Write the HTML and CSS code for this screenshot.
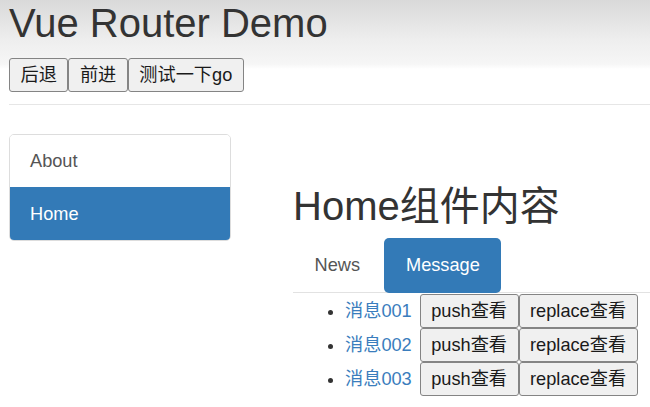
FILE: index.html
```html
<!DOCTYPE html>
<html lang="zh-CN">
<head>
<meta charset="utf-8">
<title>Vue Router Demo</title>
<link rel="stylesheet" href="styles.css">
</head>
<body>
<div class="page">
  <header class="page-header">
    <h2 class="title">Vue Router Demo</h2>
    <div class="btn-row">
      <button class="btn">后退</button><button class="btn">前进</button><button class="btn">测试一下go</button>
    </div>
  </header>
  <div class="main">
    <aside class="side">
      <div class="list-group">
        <a class="list-item" href="#">About</a>
        <a class="list-item active" href="#">Home</a>
      </div>
    </aside>
    <section class="content">
      <h2 class="sub-title">Home组件内容</h2>
      <nav class="tabs">
        <a class="tab" href="#">News</a>
        <a class="tab active" href="#">Message</a>
      </nav>
      <ul class="msg-list">
        <li class="msg"><a class="msg-link" href="#">消息001</a><span class="btn-row inline"><button class="btn">push查看</button><button class="btn">replace查看</button></span></li>
        <li class="msg"><a class="msg-link" href="#">消息002</a><span class="btn-row inline"><button class="btn">push查看</button><button class="btn">replace查看</button></span></li>
        <li class="msg"><a class="msg-link" href="#">消息003</a><span class="btn-row inline"><button class="btn">push查看</button><button class="btn">replace查看</button></span></li>
      </ul>
    </section>
  </div>
</div>
</body>
</html>
```
FILE: styles.css
```css
* { box-sizing: border-box; }

html, body {
  margin: 0;
  padding: 0;
}

body {
  width: 650px;
  height: 407px;
  overflow: hidden;
  font-family: "Liberation Sans", Arial, "Noto Sans CJK SC", sans-serif;
  font-size: 18.2px;
  color: #333;
  background: #fff linear-gradient(to bottom, #d9d9d9 0px, #eeeeee 40px, #f6f6f6 64px, #ffffff 69px) no-repeat;
  background-size: 100% 70px;
}

.page {
  padding-left: 9px;
}

.page-header {
  padding-top: 1px;
  padding-bottom: 12px;
  border-bottom: 1px solid #e6e6e6;
}

.title {
  margin: 0;
  font-size: 40px;
  line-height: 44px;
  font-weight: 400;
  color: #333;
}

.btn-row {
  display: flex;
  margin-top: 13px;
}

.btn-row.inline {
  display: inline-flex;
  margin-top: 0;
  margin-left: 8px;
  vertical-align: top;
}

.btn {
  height: 34px;
  margin: 0;
  padding: 0 10.5px;
  font-family: "Liberation Sans", Arial, "Noto Sans CJK SC", sans-serif;
  font-size: 18.2px;
  line-height: 1;
  color: #1a1a1a;
  background: #f0f0f0;
  border: 1px solid #848484;
  border-radius: 3px;
}

.main {
  display: flex;
  margin-top: 29px;
}

.side {
  width: 222px;
  flex: none;
}

.list-group {
  border: 1px solid #ddd;
  border-radius: 5px;
  overflow: hidden;
}

.list-item {
  display: block;
  padding: 13px 20px;
  line-height: 26px;
  color: #555;
  text-decoration: none;
  background: #fff;
}

.list-item.active {
  color: #fff;
  background: #337ab7;
  border-top: 1px solid #337ab7;
}

.content {
  flex: 1;
  margin-left: 62px;
  padding-top: 50px;
}

.sub-title {
  margin: 0;
  font-size: 40px;
  line-height: 44px;
  font-weight: 400;
  color: #333;
}

.tabs {
  display: flex;
  margin-top: 10px;
  border-bottom: 1px solid #e2e2e2;
}

.tab {
  height: 55px;
  margin-bottom: -1px;
  padding: 0 21.5px;
  line-height: 55px;
  color: #555;
  text-decoration: none;
  border-radius: 5px;
}

.tab + .tab {
  margin-left: 3px;
}

.tab.active {
  color: #fff;
  background: #337ab7;
}

.msg-list {
  margin: 1px 0 0;
  padding-left: 52px;
}

.msg {
  height: 34px;
  line-height: 34px;
}

.msg-link {
  color: #3a7dbd;
  text-decoration: none;
}
```
